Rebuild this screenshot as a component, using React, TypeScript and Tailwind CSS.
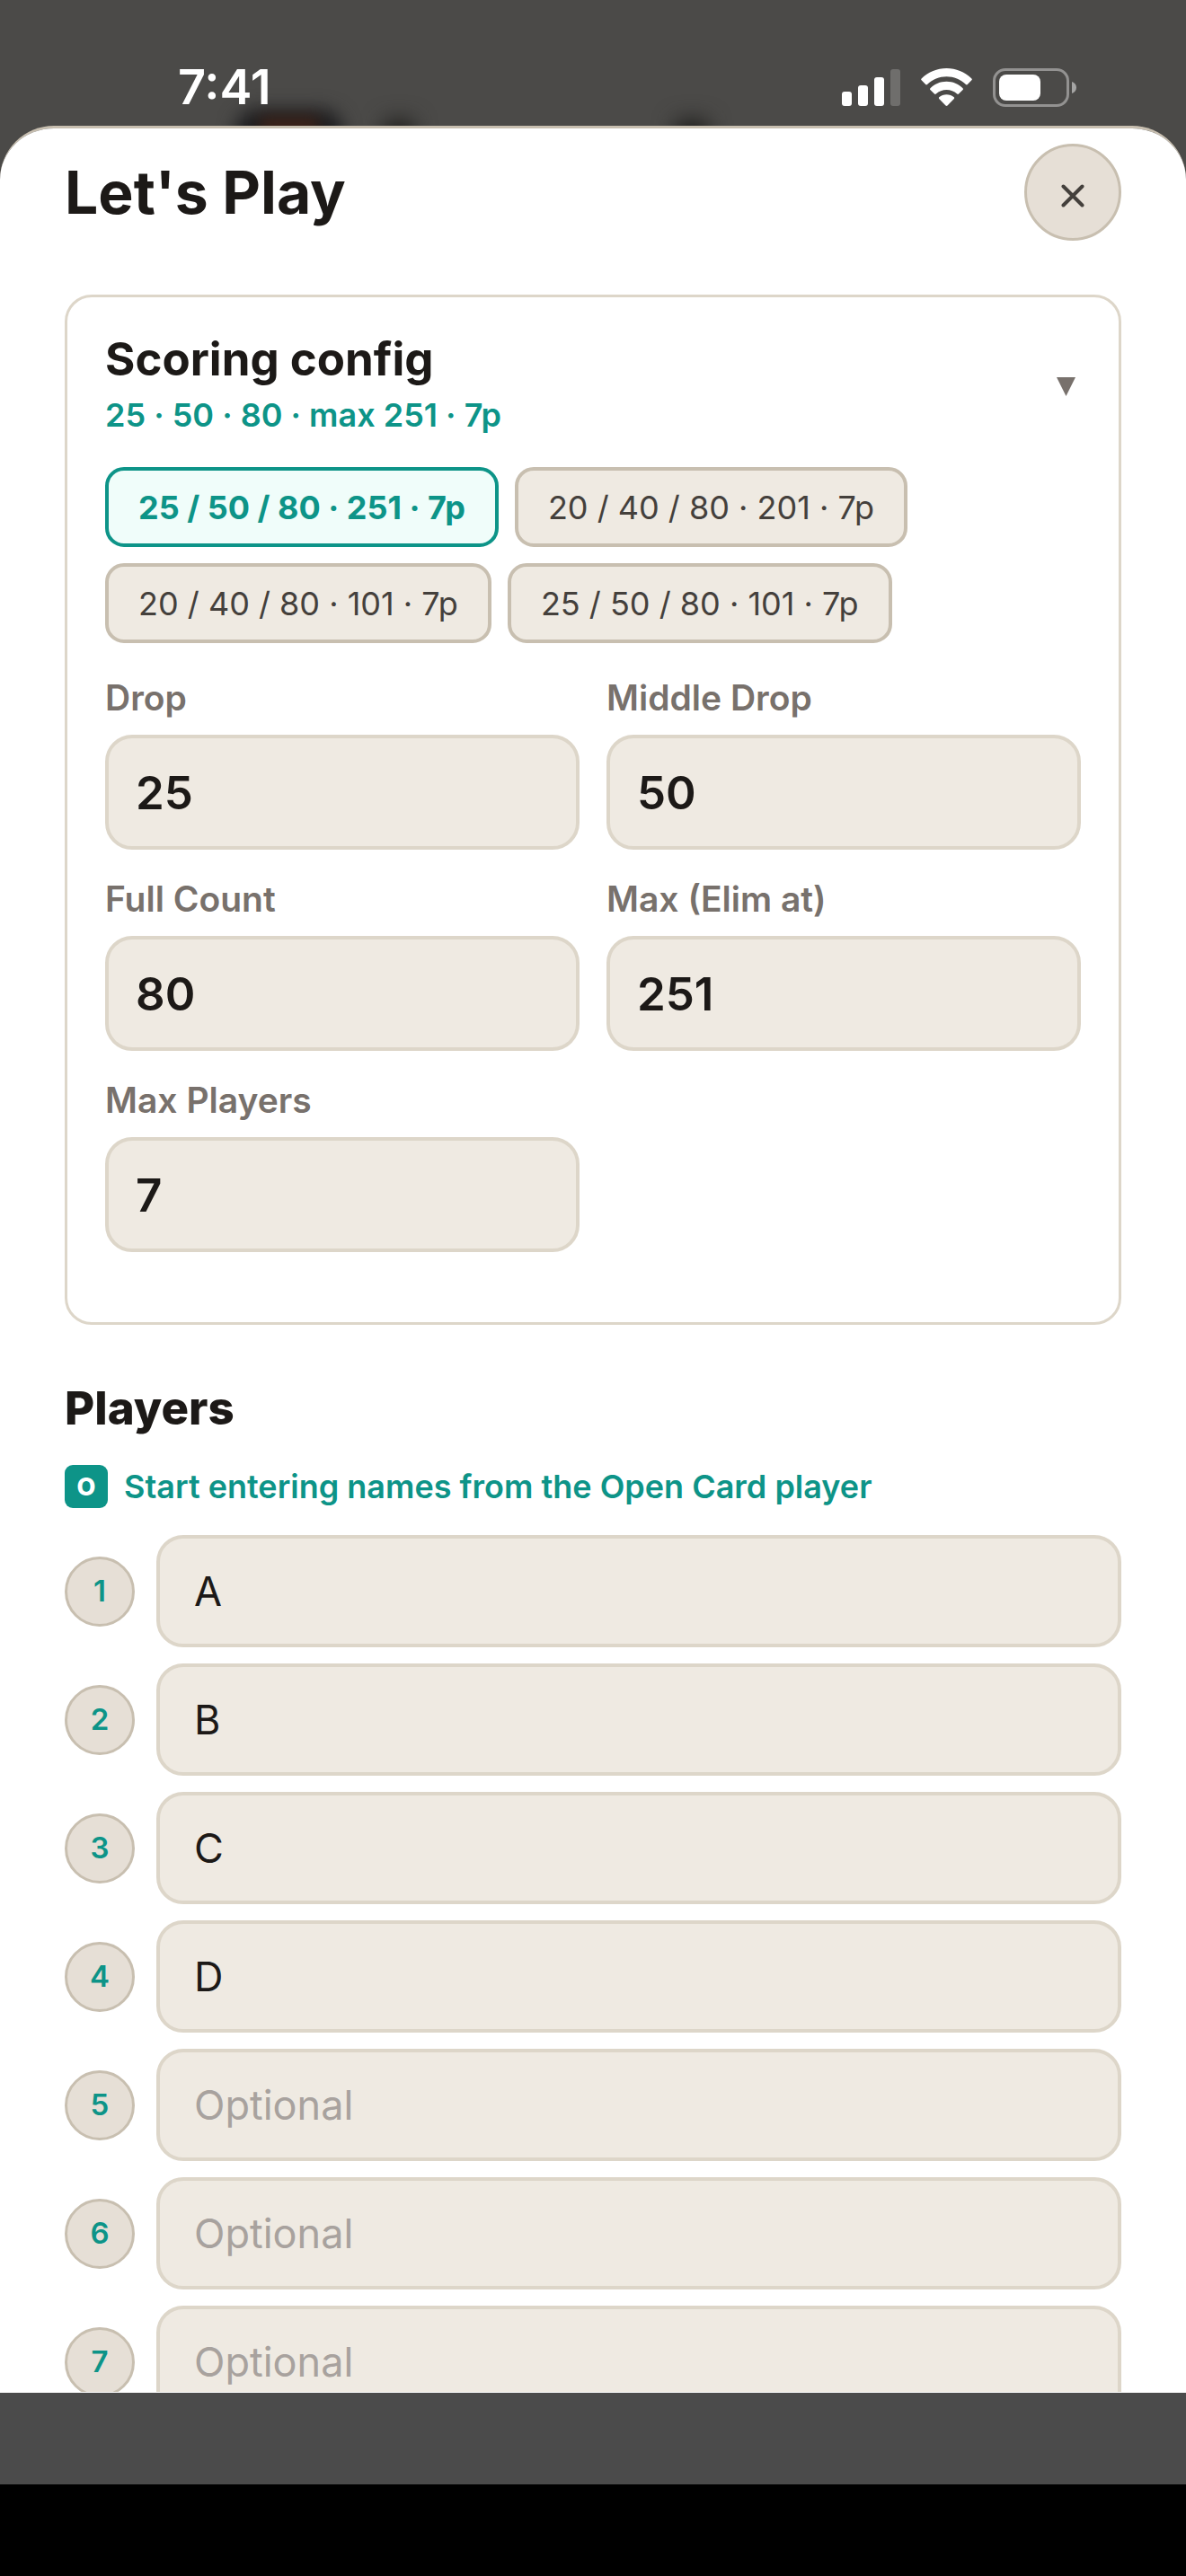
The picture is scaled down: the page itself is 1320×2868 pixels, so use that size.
import { useState } from 'react';
import clsx from 'clsx';

interface ScoringConfig {
  drop: string;
  middleDrop: string;
  fullCount: string;
  max: string;
  maxPlayers: string;
}

const PRESETS: ScoringConfig[] = [
  { drop: '25', middleDrop: '50', fullCount: '80', max: '251', maxPlayers: '7' },
  { drop: '20', middleDrop: '40', fullCount: '80', max: '201', maxPlayers: '7' },
  { drop: '20', middleDrop: '40', fullCount: '80', max: '101', maxPlayers: '7' },
  { drop: '25', middleDrop: '50', fullCount: '80', max: '101', maxPlayers: '7' },
];

const FIELDS: { key: keyof ScoringConfig; label: string }[] = [
  { key: 'drop', label: 'Drop' },
  { key: 'middleDrop', label: 'Middle Drop' },
  { key: 'fullCount', label: 'Full Count' },
  { key: 'max', label: 'Max (Elim at)' },
  { key: 'maxPlayers', label: 'Max Players' },
];

const presetLabel = (p: ScoringConfig) =>
  `${p.drop} / ${p.middleDrop} / ${p.fullCount} · ${p.max} · ${p.maxPlayers}p`;

const summary = (c: ScoringConfig) =>
  `${c.drop} · ${c.middleDrop} · ${c.fullCount} · max ${c.max} · ${c.maxPlayers}p`;

function StatusBar() {
  return (
    <header className="relative h-[140px] shrink-0 pt-[54px] pl-[198px] pr-[122px] flex items-center justify-between text-white">
      {/* app header showing through the backdrop */}
      <div className="absolute left-[262px] top-[122px] w-[120px] h-20 rounded-3xl bg-[#1d1d1f] blur-[10px]" />
      <div className="absolute left-[290px] top-[130px] w-[64px] h-16 bg-[#3d2319] blur-[8px]" />
      <div className="absolute left-[428px] top-[134px] w-8 h-20 bg-[#1d1c1a] blur-[12px]" />
      <div className="absolute left-[752px] top-[134px] w-9 h-20 bg-[#1d1c1a] blur-[12px]" />

      <span className="relative text-[54px] leading-[60px] font-semibold">7:41</span>
      <div className="relative flex items-center">
        <svg width="65" height="43" viewBox="0 0 65 43" fill="currentColor" className="mr-[23px]">
          <rect x="0" y="26" width="11" height="16" rx="3" />
          <rect x="18" y="19" width="11" height="23" rx="3" />
          <rect x="36" y="10" width="11" height="32" rx="3" />
          <rect x="54" y="1" width="11" height="41" rx="3" opacity="0.2" />
        </svg>
        <svg width="57" height="43" viewBox="0 0 57 43" fill="currentColor" className="mr-[23px]">
          <path d="M28.5 0C39 0 48.6 4 56.4 11.4Q57.3 12.3 56.4 13.2L51.8 18Q50.9 18.8 50 18C44 12.3 36.6 9.2 28.5 9.2S13 12.3 7 18Q6.1 18.8 5.2 18L.6 13.2Q-.3 12.3 .6 11.4C8.4 4 18 0 28.5 0Z" />
          <path d="M28.5 14.8C35.5 14.8 41.6 17.5 46.6 22.2Q47.5 23.1 46.6 24L42 28.5Q41.1 29.3 40.2 28.5C37 25.5 33 23.9 28.5 23.9S20 25.5 16.8 28.5Q15.9 29.3 15 28.5L10.4 24Q9.5 23.1 10.4 22.2C15.4 17.5 21.5 14.8 28.5 14.8Z" />
          <path d="M28.5 29.2C31.7 29.2 34.5 30.4 36.8 32.3Q37.6 33.1 36.8 34L29.5 41.6Q28.5 42.5 27.5 41.6L20.2 34Q19.4 33.1 20.2 32.3C22.5 30.4 25.3 29.2 28.5 29.2Z" />
        </svg>
        <svg width="93" height="43" viewBox="0 0 93 43" fill="currentColor">
          <rect x="1.5" y="1.5" width="82" height="40" rx="12.5" fill="none" stroke="currentColor" strokeWidth="3" opacity="0.4" />
          <rect x="7" y="7" width="46" height="29" rx="8" />
          <path d="M88 15C91 15.8 93 18.4 93 21.5S91 27.2 88 28Z" opacity="0.5" />
        </svg>
      </div>
    </header>
  );
}

interface FieldProps {
  id: string;
  label: string;
  value: string;
  onChange: (value: string) => void;
}

function ConfigField({ id, label, value, onChange }: FieldProps) {
  return (
    <div className="min-w-0">
      <label htmlFor={id} className="block mb-4 text-[39px] leading-[50px] font-semibold text-[#78716c]">
        {label}
      </label>
      <input
        id={id}
        type="text"
        inputMode="numeric"
        value={value}
        onChange={(e) => onChange(e.target.value)}
        className="block w-full h-32 px-[30px] rounded-[30px] border-4 border-[#ddd6c9] bg-[#efeae2] text-[51px] font-semibold text-[#1c1917] outline-none"
      />
    </div>
  );
}

export default function App() {
  const [config, setConfig] = useState<ScoringConfig>(PRESETS[0]);
  const [expanded, setExpanded] = useState(true);
  const [players, setPlayers] = useState(['A', 'B', 'C', 'D', '', '', '']);

  const setPlayer = (index: number, name: string) => {
    setPlayers(players.map((p, i) => (i === index ? name : p)));
  };

  return (
    <div className="h-screen flex flex-col bg-[#4b4a48] font-['Inter',sans-serif] text-[#1c1917]">
      <StatusBar />

      <main className="relative flex-1 min-h-0 overflow-y-auto [scrollbar-width:none] bg-white rounded-t-[60px] border-t-[3px] border-b border-t-[#c8bfb0] border-b-white px-[72px] pt-[17px]">
        <div className="flex items-center justify-between mb-[60px]">
          <h1 className="text-[66px] leading-[80px] font-bold">Let's Play</h1>
          <button
            type="button"
            aria-label="Close"
            className="w-[108px] h-[108px] rounded-full border-[3px] border-[#c8bfb0] bg-[#e6dfd6] flex items-center justify-center pt-2 text-[#44403c]"
          >
            <svg width="26" height="26" viewBox="0 0 26 26" stroke="currentColor" strokeWidth="4" strokeLinecap="round">
              <path d="M2.5 2.5L23.5 23.5M23.5 2.5L2.5 23.5" />
            </svg>
          </button>
        </div>

        <section className="rounded-[30px] border-[3px] border-[#ddd6c9] px-[42px] pt-[38px] pb-[78px]">
          <button
            type="button"
            aria-expanded={expanded}
            onClick={() => setExpanded(!expanded)}
            className="w-full flex items-center justify-between text-left pr-1.5"
          >
            <span>
              <span className="block text-[51px] leading-[62px] font-bold">Scoring config</span>
              <span className="block mt-1.5 text-[36px] leading-[50px] font-semibold text-[#0d9488]">
                {summary(config)}
              </span>
            </span>
            <svg width="21" height="21" viewBox="0 0 21 21" className="mt-1 text-[#78716c]" fill="currentColor">
              <path d="M0 0H21L10.5 21Z" />
            </svg>
          </button>

          {expanded && (
            <>
              <div className="flex flex-wrap gap-[18px] mt-[33px]">
                {PRESETS.map((preset) => {
                  const active = presetLabel(preset) === presetLabel(config);
                  return (
                    <button
                      key={presetLabel(preset)}
                      type="button"
                      aria-pressed={active}
                      onClick={() => setConfig(preset)}
                      className={clsx(
                        'h-[89px] px-[33px] rounded-[21px] border-4 text-[36px] whitespace-nowrap',
                        active
                          ? 'border-[#0d9488] bg-[#f0fdfa] text-[#0d9488] font-bold'
                          : 'border-[#c8bfb0] bg-[#efeae2] text-[#44403c]'
                      )}
                    >
                      {presetLabel(preset)}
                    </button>
                  );
                })}
              </div>

              <div className="grid grid-cols-2 gap-[30px] mt-9">
                {FIELDS.map(({ key, label }) => (
                  <ConfigField
                    key={key}
                    id={key}
                    label={label}
                    value={config[key]}
                    onChange={(value) => setConfig({ ...config, [key]: value })}
                  />
                ))}
              </div>
            </>
          )}
        </section>

        <section className="mt-[62px]">
          <h2 className="text-[51px] leading-[62px] font-extrabold">Players</h2>
          <div className="flex items-center gap-[18px] mt-8 text-[#0d9488]">
            <span className="w-12 h-12 rounded-[9px] bg-[#0d9488] text-white text-[27px] leading-none font-extrabold flex items-center justify-center">
              O
            </span>
            <p className="text-[36px] leading-[48px] font-semibold">
              Start entering names from the Open Card player
            </p>
          </div>

          <ol className="flex flex-col gap-[18px] mt-[30px]">
            {players.map((name, i) => (
              <li key={i} className="flex items-center gap-6">
                <label
                  htmlFor={`player-${i}`}
                  className="w-[78px] h-[78px] shrink-0 rounded-full border-[3px] border-[#c8bfb0] bg-[#e6dfd6] text-[33px] font-semibold text-[#0d9488] flex items-center justify-center"
                >
                  {i + 1}
                </label>
                <input
                  id={`player-${i}`}
                  type="text"
                  value={name}
                  placeholder="Optional"
                  onChange={(e) => setPlayer(i, e.target.value)}
                  className="flex-1 min-w-0 h-[125px] px-[38px] rounded-[30px] border-4 border-[#ddd6c9] bg-[#efeae2] text-[45px] text-[#1c1917] placeholder:text-[#a8a29e] outline-none"
                />
              </li>
            ))}
          </ol>
        </section>
      </main>

      <div className="h-[102px] shrink-0 bg-[#4b4b4b]" />
      <div className="h-[102px] shrink-0 bg-black" />
    </div>
  );
}
